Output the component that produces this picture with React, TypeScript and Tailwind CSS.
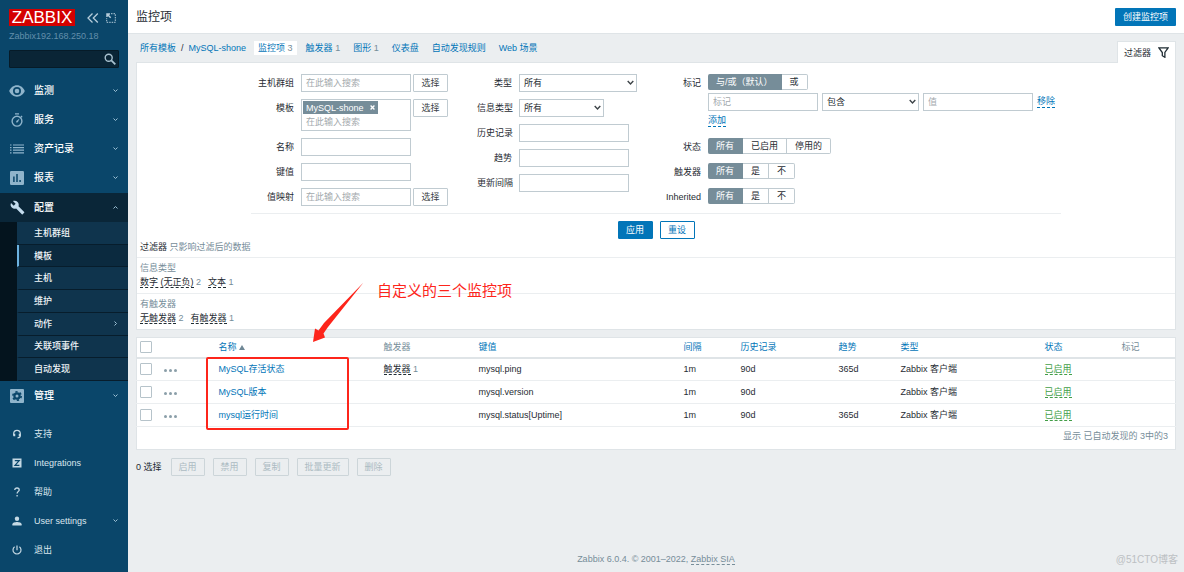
import { useState, type ReactNode } from "react";

const inputCls =
  "h-[18px] w-[110px] border border-[#c0cbd1] bg-white px-[4px] text-[9px] text-[#1f2c33] outline-none placeholder:text-[#a3a9ad] focus:border-[#0275b8]";
const buttonCls =
  "h-[18px] w-[35px] shrink-0 rounded-[1px] border border-[#c0cbd1] bg-white text-[9px] leading-[16px] text-[#3c4347] hover:bg-[#ebeef0]";
const dottedCls = "border-b border-dashed";

function Chevron(props: { className?: string }) {
  return (
    <svg viewBox="0 0 10 10" fill="none" stroke="currentColor" strokeWidth="2" className={props.className ?? "size-[5px]"}>
      <path d="M1 3l4 4 4-4" />
    </svg>
  );
}

const icons: Record<string, ReactNode> = {
  eye: (
    <svg viewBox="0 0 16 12" className="h-[12px] w-[16px]">
      <path fill="currentColor" fillRule="evenodd" d="M8 .3C4.5.3 1.500 2.600.2 6c1.300 3.400 4.300 5.700 7.800 5.700s6.500-2.300 7.800-5.700C14.500 2.600 11.500.3 8 .3zM8 10a4 4 0 110-8 4 4 0 010 8zm0-6.300a2.300 2.300 0 100 4.600 2.300 2.300 0 000-4.600z" />
    </svg>
  ),
  timer: (
    <svg viewBox="0 0 14 14" className="size-[14px]" fill="none" stroke="currentColor" strokeWidth="1.400">
      <circle cx="7" cy="8.200" r="4.900" />
      <path d="M5 .9h4M10.900 3l1.200 1.200" />
      <path d="M9.600 5.600L7.900 9.200 6.100 9.500l.2-1.400z" fill="currentColor" stroke="none" />
    </svg>
  ),
  list: (
    <svg viewBox="0 0 14 10" className="h-[10px] w-[14px]" fill="none" stroke="currentColor" strokeWidth="1.200">
      <path d="M0 1h1.500M3 1h11M0 3.600h1.500M3 3.600h11M0 6.200h1.500M3 6.200h11M0 8.800h1.500M3 8.800h11" />
    </svg>
  ),
  chart: (
    <svg viewBox="0 0 14 14" className="size-[14px]">
      <rect width="14" height="14" rx="1.200" fill="currentColor" />
      <path d="M3.900 5.500V11M7 3v8M10.100 9v2" stroke="#0a466a" strokeWidth="1.500" />
    </svg>
  ),
  wrench: (
    <svg viewBox="0 0 24 24" className="size-[15px]">
      <path fill="currentColor" d="M22.700 19l-9.100-9.100c.9-2.300.4-5-1.500-6.900-2-2-5-2.400-7.400-1.300L9 6 6 9 1.600 4.700C.4 7.100.9 10.100 2.900 12.100c1.900 1.900 4.600 2.400 6.900 1.500l9.100 9.100c.4.4 1 .4 1.400 0l2.300-2.300c.5-.4.5-1.100.1-1.400z" />
    </svg>
  ),
  gear: (
    <svg viewBox="0 0 14 14" className="size-[14px]">
      <rect width="14" height="14" rx="1" fill="currentColor" />
      <circle cx="7" cy="7" r="2.600" fill="none" stroke="#0a466a" strokeWidth="2.200" />
      <circle cx="7" cy="7" r="4.200" fill="none" stroke="#0a466a" strokeWidth="1.600" strokeDasharray="2.200 2.200" />
    </svg>
  ),
  support: (
    <svg viewBox="0 0 10 10" className="size-[10px]" fill="none" stroke="currentColor" strokeWidth="1.200">
      <path d="M1.700 6.500V4.600a3.300 3.300 0 016.600 0v2.200c0 1.300-.9 2-2.800 2.100" />
      <path d="M2.300 4.800v2.400M7.700 4.800v2.400" strokeWidth="1.900" />
    </svg>
  ),
  zed: (
    <svg viewBox="0 0 10 10" className="size-[10px]">
      <rect x=".5" y=".5" width="9" height="9" fill="currentColor" />
      <path d="M2.800 2.700h4.400L3 7.300h4.400" fill="none" stroke="#0a466a" strokeWidth="1.200" />
    </svg>
  ),
  help: (
    <svg viewBox="0 0 10 10" className="size-[10px]" fill="none" stroke="currentColor" strokeWidth="1.300">
      <path d="M2.800 3c0-1.300.9-2 2.200-2s2.200.8 2.200 1.900c0 1.400-2.100 1.700-2.100 3.700M5.100 7.900v1.500" />
    </svg>
  ),
  user: (
    <svg viewBox="0 0 10 10" className="size-[10px]" fill="currentColor">
      <circle cx="5" cy="2.700" r="2.200" />
      <path d="M.4 9.500V8.300C.4 6.700 3.300 6 5 6s4.600.7 4.600 2.300v1.200z" />
    </svg>
  ),
  power: (
    <svg viewBox="0 0 10 10" className="size-[10px]" fill="none" stroke="currentColor" strokeWidth="1.200">
      <path d="M5 .4v4.800M2.600 1.800a4 4 0 104.800 0" />
    </svg>
  ),
};

function MenuItem(props: { icon: string; label: string; chevron?: "down" | "up"; small?: boolean; open?: boolean }) {
  return (
    <a
      href="#"
      className={`flex h-[29px] shrink-0 items-center pr-[10px] text-white ${props.open ? "bg-[#0a2638]" : "hover:bg-[#0b3a58]"}`}
    >
      <span className={`flex w-[34px] justify-center ${props.small ? "text-[#c5d9e4]" : props.open ? "text-[#c3dcee]" : "text-[#8fb4cb]"}`}>
        {icons[props.icon]}
      </span>
      <span className={props.small ? "text-[9px] text-[#dbe7ee]" : "text-[10px] font-medium"}>{props.label}</span>
      {props.chevron && (
        <span className={`ml-auto text-[#9cc0d5] ${props.chevron === "up" ? "rotate-180" : ""}`}>
          <Chevron />
        </span>
      )}
    </a>
  );
}

const submenu = ["主机群组", "模板", "主机", "维护", "动作", "关联项事件", "自动发现"];

function Sidebar() {
  return (
    <aside className="flex w-[128px] shrink-0 flex-col bg-[#0a466a] pb-[8px]">
      <div className="mt-[9px] flex h-[17px] items-center px-[9px]">
        <a href="#" className="flex h-[17px] w-[66px] items-center justify-center bg-[#d40000] text-[17px] leading-[17px] text-white">
          ZABBIX
        </a>
        <button title="收起侧边栏" className="ml-[12px] text-[#b6cddb]">
          <svg viewBox="0 0 12 12" className="size-[12px]" fill="none" stroke="currentColor" strokeWidth="1.300">
            <path d="M5.500 1.500L1 6l4.500 4.500M10.800 1.500L6.300 6l4.500 4.500" />
          </svg>
        </button>
        <button title="隐藏侧边栏" className="ml-[7px] text-[#b6cddb]">
          <svg viewBox="0 0 10 10" className="size-[10px]" fill="none" stroke="currentColor">
            <path d="M5 .7h4.300v8.600H.7V5" strokeDasharray="1.500 1" />
            <path d="M1 4V1h3M1 1l3.700 3.700" strokeWidth="1.500" />
          </svg>
        </button>
      </div>
      <div className="mt-[4px] px-[9px] text-[9px] leading-[12px] text-[#638faa]">Zabbix192.168.250.18</div>
      <div className="relative mx-[9px] mt-[8px] mb-[8px]">
        <input
          aria-label="搜索"
          className="block h-[18px] w-full rounded-[1px] border border-[#061b28] bg-[#0a2536] pr-5 pl-1 text-[9px] text-white outline-none"
        />
        <svg viewBox="0 0 12 12" className="absolute top-[3px] right-[3px] size-[12px] text-[#a9c2d0]" fill="none" stroke="currentColor" strokeWidth="1.400">
          <circle cx="4.700" cy="4.700" r="3.500" />
          <path d="M7.300 7.300l4 4" strokeWidth="1.800" />
        </svg>
      </div>
      <nav>
        <div className="pb-px">
          <MenuItem icon="eye" label="监测" chevron="down" />
          <MenuItem icon="timer" label="服务" chevron="down" />
          <MenuItem icon="list" label="资产记录" chevron="down" />
          <MenuItem icon="chart" label="报表" chevron="down" />
        </div>
        <MenuItem icon="wrench" label="配置" chevron="up" open />
        <ul className="flex h-[159px] flex-col bg-[#04141e] pl-[17px]">
          {submenu.map((s) => (
            <li
              key={s}
              className={`flex-1 border-b border-l-2 border-b-[#071d2c] ${
                s === "模板" ? "border-l-[#6cb2e0] bg-[#0b2a3f]" : "border-l-[#0f344d] bg-[#0f344d]"
              }`}
            >
              <a href="#" className="flex h-full items-center pr-[10px] pl-[15px] text-[9px] font-medium text-[#f0f5f8]">
                {s}
                {s === "动作" && <Chevron className="ml-auto size-[5px] -rotate-90 text-[#9cc0d5]" />}
              </a>
            </li>
          ))}
        </ul>
        <MenuItem icon="gear" label="管理" chevron="down" />
      </nav>
      <nav className="mt-auto">
        <MenuItem icon="support" label="支持" small />
        <MenuItem icon="zed" label="Integrations" small />
        <MenuItem icon="help" label="帮助" small />
        <MenuItem icon="user" label="User settings" chevron="down" small />
        <MenuItem icon="power" label="退出" small />
      </nav>
    </aside>
  );
}

function Row(props: { label: string; htmlFor?: string; labelWidth: string; children: ReactNode }) {
  return (
    <div className="flex items-start gap-[7px]">
      <label htmlFor={props.htmlFor} className={`shrink-0 text-right leading-[18px] whitespace-nowrap ${props.labelWidth}`}>
        {props.label}
      </label>
      {props.children}
    </div>
  );
}

function Select(props: { id?: string; label?: string; width: string; options: string[] }) {
  return (
    <div className={`relative ${props.width}`}>
      <select
        id={props.id}
        aria-label={props.label}
        className="block h-[18px] w-full appearance-none border border-[#c0cbd1] bg-white px-[4px] text-[9px] leading-[16px] text-[#1f2c33] outline-none"
      >
        {props.options.map((o) => (
          <option key={o}>{o}</option>
        ))}
      </select>
      <Chevron className="pointer-events-none absolute top-[5px] right-[3px] size-[7px] text-[#3c4347]" />
    </div>
  );
}

function Segmented(props: { name: string; options: string[] }) {
  const [value, setValue] = useState(props.options[0]);
  return (
    <div role="radiogroup" aria-label={props.name} className="flex h-[16px] text-[9px] leading-[14px]">
      {props.options.map((o, i) => (
        <label
          key={o}
          className={`relative border-y border-r px-[8px] ${i === 0 ? "rounded-l-[2px]" : ""} ${
            i === props.options.length - 1 ? "rounded-r-[2px]" : ""
          } ${value === o ? "border-[#768d99] bg-[#768d99] text-white" : "border-[#c0cbd1] bg-white"}`}
        >
          <input
            type="radio"
            name={props.name}
            checked={value === o}
            onChange={() => setValue(o)}
            className="sr-only"
          />
          {o}
        </label>
      ))}
    </div>
  );
}

function Filter() {
  return (
    <section className="border border-[#dfe4e7] bg-white">
      <form onSubmit={(e) => e.preventDefault()} className="mx-auto max-w-[810px] pt-[11px]">
        <div className="flex gap-[29px] border-b border-[#ebeef0] pb-[7px]">
          <div className="flex flex-col gap-[7px]">
            <Row label="主机群组" htmlFor="groups" labelWidth="w-[43px]">
              <div className="flex gap-[2px]">
                <input id="groups" placeholder="在此输入搜索" className={inputCls} />
                <button type="button" className={buttonCls}>选择</button>
              </div>
            </Row>
            <Row label="模板" htmlFor="templates" labelWidth="w-[43px]">
              <div className="flex gap-[2px]">
                <div className="h-[32px] w-[110px] border border-[#c0cbd1] p-px">
                  <div className="flex h-[13px] w-[75px] items-center justify-between bg-[#768d99] px-[3px] text-[9px] font-medium text-white">
                    MySQL-shone
                    <button type="button" title="移除" className="flex">
                      <svg viewBox="0 0 6 6" className="size-[5px]" stroke="currentColor" strokeWidth="1.600">
                        <path d="M.7.7l4.600 4.600M5.300.7L.7 5.300" />
                      </svg>
                    </button>
                  </div>
                  <input
                    id="templates"
                    placeholder="在此输入搜索"
                    className="block h-[15px] w-full px-[3px] text-[9px] outline-none placeholder:text-[#a3a9ad]"
                  />
                </div>
                <button type="button" className={buttonCls}>选择</button>
              </div>
            </Row>
            <Row label="名称" htmlFor="name" labelWidth="w-[43px]">
              <input id="name" className={inputCls} />
            </Row>
            <Row label="键值" htmlFor="key" labelWidth="w-[43px]">
              <input id="key" className={inputCls} />
            </Row>
            <Row label="值映射" htmlFor="valuemap" labelWidth="w-[43px]">
              <div className="flex gap-[2px]">
                <input id="valuemap" placeholder="在此输入搜索" className={inputCls} />
                <button type="button" className={buttonCls}>选择</button>
              </div>
            </Row>
          </div>

          <div className="flex flex-col gap-[7px]">
            <Row label="类型" htmlFor="type" labelWidth="w-[35px]">
              <Select id="type" width="w-[118px]" options={["所有", "Zabbix 客户端"]} />
            </Row>
            <Row label="信息类型" htmlFor="valuetype" labelWidth="w-[35px]">
              <Select id="valuetype" width="w-[85px]" options={["所有", "文本"]} />
            </Row>
            <Row label="历史记录" htmlFor="history" labelWidth="w-[35px]">
              <input id="history" className={inputCls} />
            </Row>
            <Row label="趋势" htmlFor="trends" labelWidth="w-[35px]">
              <input id="trends" className={inputCls} />
            </Row>
            <Row label="更新间隔" htmlFor="delay" labelWidth="w-[35px]">
              <input id="delay" className={inputCls} />
            </Row>
          </div>

          <div className="flex flex-col gap-[7px]">
            <Row label="标记" labelWidth="w-[35px]">
              <div>
                <Segmented name="标记" options={["与/或（默认）", "或"]} />
                <div className="mt-[3px] flex items-center gap-[4px]">
                  <input aria-label="标记" placeholder="标记" className={inputCls} />
                  <Select label="运算符" width="w-[97px]" options={["包含", "等于"]} />
                  <input aria-label="值" placeholder="值" className={inputCls} />
                  <a href="#" className={`${dottedCls} border-[#0275b8] leading-[11px] whitespace-nowrap text-[#0275b8]`}>移除</a>
                </div>
                <div className="flex h-[20px] items-center">
                  <a href="#" className={`${dottedCls} border-[#0275b8] leading-[11px] text-[#0275b8]`}>添加</a>
                </div>
              </div>
            </Row>
            <Row label="状态" labelWidth="w-[35px]">
              <Segmented name="状态" options={["所有", "已启用", "停用的"]} />
            </Row>
            <Row label="触发器" labelWidth="w-[35px]">
              <Segmented name="触发器" options={["所有", "是", "不"]} />
            </Row>
            <Row label="Inherited" labelWidth="w-[35px]">
              <Segmented name="Inherited" options={["所有", "是", "不"]} />
            </Row>
          </div>
        </div>
        <div className="flex justify-center gap-[7px] pt-[7px] pb-px">
          <button type="submit" className="h-[18px] w-[35px] rounded-[1px] border border-[#0275b8] bg-[#0275b8] text-[9px] leading-[16px] text-white">
            应用
          </button>
          <button type="reset" className="h-[18px] w-[35px] rounded-[1px] border border-[#0275b8] bg-white text-[9px] leading-[16px] text-[#0275b8]">
            重设
          </button>
        </div>
      </form>
      <div className="border-b border-[#ebeef0] px-[3px] pb-[3px] leading-[14px] text-[#768d99]">
        <span className="text-[#1f2c33]">过滤器</span> 只影响过滤后的数据
      </div>
      <Subfilter title="信息类型" items={[["数字 (无正负)", 2], ["文本", 1]]} />
      <Subfilter title="有触发器" items={[["无触发器", 2], ["有触发器", 1]]} />
    </section>
  );
}

function Subfilter(props: { title: string; items: [string, number][] }) {
  return (
    <div className="border-b border-[#ebeef0] px-[3px] pt-[3px] pb-[4px] text-[#768d99] last:border-b-0">
      <h3 className="leading-[14px]">{props.title}</h3>
      <div className="flex gap-[7px] leading-[14px]">
        {props.items.map(([label, n]) => (
          <span key={label}>
            <a href="#" className={`${dottedCls} border-[#1f2c33] text-[#1f2c33]`}>{label}</a> {n}
          </span>
        ))}
      </div>
    </div>
  );
}

const rows = [
  { name: "MySQL存活状态", triggers: 1, key: "mysql.ping", trends: "365d" },
  { name: "MySQL版本", triggers: 0, key: "mysql.version", trends: "" },
  { name: "mysql运行时间", triggers: 0, key: "mysql.status[Uptime]", trends: "365d" },
];

const checkboxCls = "block size-[12px] appearance-none rounded-[1px] border border-[#b6c3ca] bg-white checked:bg-[#0275b8]";

function ItemsTable() {
  return (
    <div className="relative mt-[7px]">
      <table className="w-full table-fixed border-collapse border border-[#dfe4e7] bg-white text-left">
        <colgroup>
          <col className="w-[24px]" />
          <col className="w-[55px]" />
          <col className="w-[165px]" />
          <col className="w-[95px]" />
          <col />
          <col className="w-[57px]" />
          <col className="w-[98px]" />
          <col className="w-[62px]" />
          <col className="w-[144px]" />
          <col className="w-[77px]" />
          <col className="w-[57px]" />
        </colgroup>
        <thead>
          <tr className="h-[20px] border-b-2 border-[#dfe4e7] text-[#0275b8] [&>th]:px-[3px] [&>th]:font-normal">
            <th><input type="checkbox" aria-label="全选" className={checkboxCls} /></th>
            <th></th>
            <th>
              <a href="#" className="inline-flex items-center gap-[2px]">
                名称
                <svg viewBox="0 0 6 5" className="h-[5px] w-[6px]" fill="#6f8795"><path d="M3 0l3 5H0z" /></svg>
              </a>
            </th>
            <th className="text-[#768d99]">触发器</th>
            <th><a href="#">键值</a></th>
            <th><a href="#">间隔</a></th>
            <th><a href="#">历史记录</a></th>
            <th><a href="#">趋势</a></th>
            <th><a href="#">类型</a></th>
            <th><a href="#">状态</a></th>
            <th className="text-[#768d99]">标记</th>
          </tr>
        </thead>
        <tbody>
          {rows.map((r) => (
            <tr key={r.name} className="h-[23px] border-b border-[#ebeef0] hover:bg-[#f6fbff] [&>td]:px-[3px]">
              <td><input type="checkbox" aria-label={r.name} className={checkboxCls} /></td>
              <td>
                <button title="更多" className="flex gap-[2px] pt-[3px]">
                  <i className="size-[3px] rounded-full bg-[#8b9fa9]" />
                  <i className="size-[3px] rounded-full bg-[#8b9fa9]" />
                  <i className="size-[3px] rounded-full bg-[#8b9fa9]" />
                </button>
              </td>
              <td><a href="#" className="text-[#0275b8]">{r.name}</a></td>
              <td className="text-[#768d99]">
                {r.triggers > 0 && (
                  <>
                    <a href="#" className={`${dottedCls} border-[#1f2c33] text-[#1f2c33]`}>触发器</a> {r.triggers}
                  </>
                )}
              </td>
              <td>{r.key}</td>
              <td>1m</td>
              <td>90d</td>
              <td>{r.trends}</td>
              <td>Zabbix 客户端</td>
              <td><a href="#" className={`${dottedCls} border-[#429e47] text-[#429e47]`}>已启用</a></td>
              <td></td>
            </tr>
          ))}
        </tbody>
        <tfoot>
          <tr className="h-[23px] text-right text-[#768d99]">
            <td colSpan={11} className="px-[7px] pb-[4px]">显示 已自动发现的 3中的3</td>
          </tr>
        </tfoot>
      </table>

      {/* hand-drawn note over the table */}
      <div className="pointer-events-none absolute top-[20px] left-[70px] h-[73px] w-[143px] rounded-[2px] border-2 border-[#fd251b]" />
      <svg viewBox="0 0 54 62" className="pointer-events-none absolute -top-[56px] left-[175px] h-[62px] w-[54px]">
        <path d="M52.500 1.500L17 46 12.500 52.500 14 56.500 2 61 4 47.500 7.500 49.500 13 42z" fill="#fd251b" />
      </svg>
      <div className="pointer-events-none absolute -top-[56px] left-[241px] text-[15px] leading-[20px] whitespace-nowrap text-[#fd251b]">
        自定义的三个监控项
      </div>
    </div>
  );
}

const tabs: [string, number?][] = [["监控项", 3], ["触发器", 1], ["图形", 1], ["仪表盘"], ["自动发现规则"], ["Web 场景"]];

export default function App() {
  return (
    <div className="flex min-h-screen bg-[#ebeef0] font-['Liberation_Sans','Noto_Sans_CJK_SC',sans-serif] text-[9px] leading-[12px] text-[#1f2c33]">
      <Sidebar />
      <div className="relative flex min-w-0 flex-1 flex-col">
        <header className="flex h-[34px] items-center justify-between border-b border-[#dfe4e7] bg-white px-[8px]">
          <h1 className="text-[12px] leading-[16px]">监控项</h1>
          <button className="h-[18px] w-[61px] rounded-[1px] bg-[#0275b8] text-[9px] leading-[18px] text-white">创建监控项</button>
        </header>
        <main className="flex flex-1 flex-col px-[8px]">
          <div className="flex h-[28px] items-end justify-between">
            <nav className="flex h-[28px] items-center gap-[5px] pl-[4px] text-[#0275b8]">
              <div className="flex gap-[5px] pr-[3px]">
                <a href="#">所有模板</a>
                <span className="text-[#1f2c33]">/</span>
                <a href="#">MySQL-shone</a>
              </div>
              {tabs.map(([label, n], i) => (
                <a key={label} href="#" className={`px-[4px] leading-[14px] ${i === 0 ? "bg-white" : ""}`}>
                  {label}
                  {n && <span className="text-[#768d99]"> {n}</span>}
                </a>
              ))}
            </nav>
            <button className="relative z-10 -mb-px flex h-[22px] items-center gap-[7px] border border-b-0 border-[#dfe4e7] bg-white px-[6px] text-[9px]">
              过滤器
              <svg viewBox="0 0 12 12" className="size-[11px]" fill="none" stroke="#1f2c33" strokeWidth="1.400">
                <path d="M1 1h10L7.500 6v5.200L4.700 9.500V6z" />
              </svg>
            </button>
          </div>
          <Filter />
          <ItemsTable />
          <div className="mt-[8px] flex items-center gap-[8px]">
            <span className="pr-px">0 选择</span>
            {["启用", "禁用", "复制", "批量更新", "删除"].map((b) => (
              <button key={b} disabled className="h-[18px] rounded-[1px] border border-[#ccd5d9] px-[7px] text-[9px] leading-[16px] text-[#acbbc2]">
                {b}
              </button>
            ))}
          </div>
          <footer className="mt-auto pb-[7px] text-center text-[#768d99]">
            Zabbix 6.0.4. © 2001–2022, <a href="#" className={`${dottedCls} border-[#768d99]`}>Zabbix SIA</a>
          </footer>
        </main>
        <span className="absolute right-[6px] bottom-[6px] text-[10px] leading-[12px] text-[#bcc0c3]">@51CTO博客</span>
      </div>
    </div>
  );
}
